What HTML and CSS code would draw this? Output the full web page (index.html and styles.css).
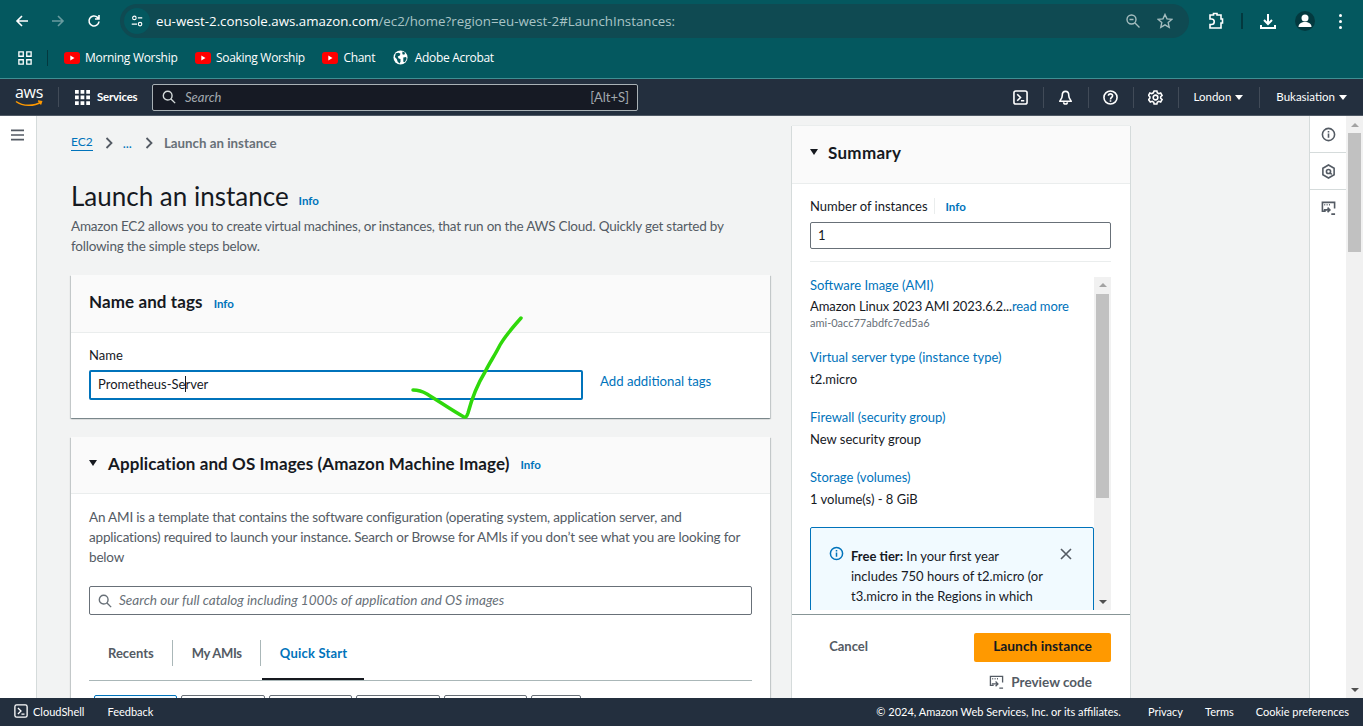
FILE: index.html
```html
<!DOCTYPE html>
<html lang="en">
<head>
    <meta charset="UTF-8">
    <meta name="viewport" content="width=device-width, initial-scale=1.0">
    <link rel="stylesheet" href="styles.css">
    <title>Launch an instance | EC2</title>
</head>
<body>
<div class="page">

    <!-- browser toolbar -->
    <header class="browser">
        <div class="toolbar">
            <svg class="tool back" viewBox="0 0 16 16"><path d="M14 8H3M8 3 3 8l5 5"/></svg>
            <svg class="tool forward" viewBox="0 0 16 16"><path d="M2 8h11M8 3l5 5-5 5"/></svg>
            <svg class="tool reload" viewBox="0 0 16 16"><path d="M13 8.500A5 5 0 1 1 11.500 4.400L13 6M13 2v4H9"/></svg>
            <div class="omnibox">
                <span class="site-info">
                    <svg viewBox="0 0 16 16"><circle cx="5" cy="4.500" r="2"/><path d="M9 4.500h5M2 11.500h6"/><circle cx="11.500" cy="11.500" r="2"/></svg>
                </span>
                <span class="url"><b>eu-west-2.console.aws.amazon.com</b>/ec2/home?region=eu-west-2#LaunchInstances:</span>
                <svg class="omni-icon zoom-icon" viewBox="0 0 16 16"><circle cx="6.500" cy="6.500" r="4.500"/><path d="M10 10l4.500 4.500M4.500 6.500h4"/></svg>
                <svg class="omni-icon star" viewBox="0 0 16 16"><path d="M8 1.500l2 4.400 4.800.5-3.600 3.200 1 4.700L8 11.900l-4.200 2.400 1-4.700L1.200 6.400l4.800-.5z"/></svg>
            </div>
            <svg class="tool ext" viewBox="0 0 18 18"><path d="M3 3h3.500V1.500h3.500V3h4v4h1.500v4H14v5H3v-3.500h1.500a2 2 0 0 0 0-5.500H3z"/></svg>
            <span class="tool-sep"></span>
            <svg class="tool download" viewBox="0 0 18 18"><path d="M9 2v10M5 8l4 4 4-4M2 13v3h14v-3"/></svg>
            <span class="avatar">
                <svg viewBox="0 0 20 20"><circle cx="10" cy="7" r="3.500"/><path d="M3.500 16c0-3.500 3-5 6.500-5s6.500 1.500 6.500 5z"/></svg>
            </span>
            <span class="kebab"><i></i><i></i><i></i></span>
        </div>
        <div class="bookmarks">
            <svg class="apps" viewBox="0 0 16 16"><path d="M1 1h5v5H1zM10 1h5v5h-5zM1 10h5v5H1zM10 10h5v5h-5z"/></svg>
            <span class="bm-sep"></span>
            <a class="bookmark"><svg class="yt" viewBox="0 0 16 12"><rect width="16" height="12" rx="3"/><path d="M6.300 3.500v5L10.500 6z"/></svg>Morning Worship</a>
            <a class="bookmark"><svg class="yt" viewBox="0 0 16 12"><rect width="16" height="12" rx="3"/><path d="M6.300 3.500v5L10.500 6z"/></svg>Soaking Worship</a>
            <a class="bookmark"><svg class="yt" viewBox="0 0 16 12"><rect width="16" height="12" rx="3"/><path d="M6.300 3.500v5L10.500 6z"/></svg>Chant</a>
            <a class="bookmark"><svg class="globe" viewBox="0 0 16 16"><circle cx="8" cy="8" r="7.500"/><path d="M3 3.500l3-.5 2 1-1 2-2 1 1 2 2 .5v3l-1 2-2-2-1-3-2-2zM10 1.500l3 1.500-1 2-2-.5zM11 8l3-.5.500 2-2 3.500-1.500-.5z"/></svg>Adobe Acrobat</a>
        </div>
    </header>

    <!-- console nav -->
    <nav class="topnav">
        <div class="aws-logo">
            <span>aws</span>
            <svg viewBox="0 0 28 7"><path d="M1 1.500c7 5 18 5 25 .5M23 1l3.500.5-1 3"/></svg>
        </div>
        <span class="nav-divider"></span>
        <svg class="grid-icon" viewBox="0 0 14 14"><path d="M0 0h3.500v3.500H0zM5.200 0h3.500v3.500H5.200zM10.500 0H14v3.500h-3.500zM0 5.200h3.500v3.500H0zM5.200 5.200h3.500v3.500H5.200zM10.500 5.200H14v3.500h-3.500zM0 10.500h3.500V14H0zM5.200 10.500h3.500V14H5.200zM10.500 10.500H14V14h-3.500z"/></svg>
        <span class="services">Services</span>
        <div class="nav-search">
            <svg viewBox="0 0 16 16"><circle cx="6.500" cy="6.500" r="5"/><path d="M10 10l5 5"/></svg>
            <em>Search</em>
            <span class="shortcut">[Alt+S]</span>
        </div>
        <div class="nav-right">
            <span class="nav-cell">
                <svg class="nav-icon" viewBox="0 0 16 16"><rect x="1" y="1" width="14" height="14" rx="2"/><path d="M4.500 4.500 8 8l-3.500 3.500M8.500 11.500H12"/></svg>
            </span>
            <span class="nav-cell">
                <svg class="nav-icon" viewBox="0 0 16 16"><path d="M8 1.500c-2.500 0-3.500 2-3.500 4.500 0 3-2.500 5-2.500 6h12c0-1-2.500-3-2.500-6 0-2.500-1-4.500-3.500-4.500zM6 13c0 2.500 4 2.500 4 0"/></svg>
            </span>
            <span class="nav-cell">
                <svg class="nav-icon" viewBox="0 0 16 16"><circle cx="8" cy="8" r="7"/><path d="M5.800 6.200C5.800 3.500 10.200 3.500 10.200 6c0 2-2.200 1.800-2.200 4M8 11v1.500"/></svg>
            </span>
            <span class="nav-cell">
                <svg class="nav-icon" viewBox="0 0 16 16"><circle cx="8" cy="8" r="2.500"/><path d="M6.500 1h3l.4 2 1.600.9 2-.7 1.500 2.600-1.500 1.400v1.600l1.500 1.400-1.500 2.600-2-.7-1.600.9-.4 2h-3l-.4-2-1.600-.9-2 .7L.5 10.200 2 8.800V7.200L.5 5.800 2 3.200l2 .7 1.600-.9z"/></svg>
            </span>
            <span class="nav-cell nav-menu london">London <i class="caret-down"></i></span>
            <span class="nav-cell nav-menu">Bukasiation <i class="caret-down"></i></span>
        </div>
    </nav>

    <div class="workspace">
        <aside class="side-rail">
            <svg viewBox="0 0 14 12"><path d="M0 1h14M0 6h14M0 11h14"/></svg>
        </aside>

        <main class="content">
            <div class="wizard">
                <div class="crumbs">
                    <a class="crumb-link">EC2</a>
                    <svg viewBox="0 0 8 12"><path d="M1.500 1l5 5-5 5"/></svg>
                    <a class="crumb-dots">...</a>
                    <svg class="crumb-last" viewBox="0 0 8 12"><path d="M1.500 1l5 5-5 5"/></svg>
                    <span class="crumb-current">Launch an instance</span>
                </div>
                <div class="page-title">
                    <h1>Launch an instance</h1>
                    <a class="info">Info</a>
                </div>
                <p class="page-desc">Amazon EC2 allows you to create virtual machines, or instances, that run on the AWS Cloud. Quickly get started by following the simple steps below.</p>

                <section class="card name-card">
                    <div class="card-head">
                        <h2>Name and tags</h2>
                        <a class="info">Info</a>
                    </div>
                    <div class="card-body">
                        <label class="field-label">Name</label>
                        <div class="name-row">
                            <div class="name-input">Prometheus-Se<span class="text-caret"></span>rver</div>
                            <a class="link">Add additional tags</a>
                        </div>
                    </div>
                </section>

                <section class="card ami-card">
                    <div class="card-head">
                        <i class="caret-card"></i>
                        <h2>Application and OS Images (Amazon Machine Image)</h2>
                        <a class="info">Info</a>
                    </div>
                    <div class="card-body">
                        <p class="ami-desc">An AMI is a template that contains the software configuration (operating system, application server, and applications) required to launch your instance. Search or Browse for AMIs if you don’t see what you are looking for below</p>
                        <div class="ami-search">
                            <svg viewBox="0 0 16 16"><circle cx="6.500" cy="6.500" r="5"/><path d="M10 10l5 5"/></svg>
                            <em>Search our full catalog including 1000s of application and OS images</em>
                        </div>
                        <div class="tabs">
                            <span class="tab">Recents</span>
                            <span class="tab tab-amis">My AMIs</span>
                            <span class="tab active">Quick Start</span>
                        </div>
                        <div class="tiles">
                            <span class="tile selected"></span>
                            <span class="tile"></span>
                            <span class="tile"></span>
                            <span class="tile"></span>
                            <span class="tile"></span>
                            <span class="tile short"></span>
                        </div>
                    </div>
                </section>
            </div>

            <section class="summary">
                <div class="summary-head">
                    <i class="caret-card"></i>
                    <h2>Summary</h2>
                </div>
                <div class="summary-body">
                    <div class="count-label"><span>Number of instances</span><a class="info">Info</a></div>
                    <div class="count-input">1</div>
                    <hr class="summary-rule">
                    <div class="summary-scroll">
                        <div class="summary-list">
                            <a class="link">Software Image (AMI)</a>
                            <p class="val ami-name">Amazon Linux 2023 AMI 2023.6.2...<a class="link">read more</a></p>
                            <p class="ami-id">ami-0acc77abdfc7ed5a6</p>
                            <a class="link gap-top">Virtual server type (instance type)</a>
                            <p class="val">t2.micro</p>
                            <a class="link gap-top">Firewall (security group)</a>
                            <p class="val">New security group</p>
                            <a class="link gap-top">Storage (volumes)</a>
                            <p class="val">1 volume(s) - 8 GiB</p>
                            <div class="free-tier">
                                <svg class="ft-icon" viewBox="0 0 16 16"><circle cx="8" cy="8" r="6.500"/><path d="M8 7v4.500M8 4.200v1.600"/></svg>
                                <p><b>Free tier:</b> In your first year includes 750 hours of t2.micro (or t3.micro in the Regions in which t2.micro is unavailable)</p>
                                <svg class="ft-close" viewBox="0 0 12 12"><path d="M1 1l10 10M11 1 1 11"/></svg>
                            </div>
                        </div>
                        <div class="mini-scroll">
                            <i class="arrow-up"></i>
                            <span class="mini-thumb"></span>
                            <i class="arrow-down"></i>
                        </div>
                    </div>
                </div>
                <div class="summary-foot">
                    <div class="actions">
                        <span class="cancel">Cancel</span>
                        <span class="launch">Launch instance</span>
                    </div>
                    <div class="preview">
                        <svg class="code-icon" viewBox="0 0 16 16"><path d="M5 11H1.500V1.500h13V8M3.500 4h1M6 4h1M8.500 4h1M3 9.500h6M7 7l2.500 2.500L7 12M11 14h4"/></svg>
                        <span>Preview code</span>
                    </div>
                </div>
            </section>
        </main>

        <aside class="tool-rail">
            <span class="rail-cell"><svg viewBox="0 0 16 16"><circle cx="8" cy="8" r="6.500"/><path d="M8 7v4.500M8 4.200v1.600"/></svg></span>
            <span class="rail-cell"><svg viewBox="0 0 16 16"><path d="M8 1l6 3.500v7L8 15l-6-3.500v-7z"/><circle cx="8" cy="8" r="2.200"/><path d="M9.500 9.500l2 1.500"/></svg></span>
            <span class="rail-cell plain"><svg viewBox="0 0 16 16"><path d="M5 11H1.500V1.500h13V8M3.500 4h1M6 4h1M8.500 4h1M3 9.500h6M7 7l2.500 2.500L7 12M11 14h4"/></svg></span>
        </aside>
        <div class="page-scroll">
            <i class="arrow-up"></i>
            <span class="page-thumb"></span>
            <i class="arrow-down"></i>
        </div>

        <!-- hand drawn tick on top of the screenshot -->
        <svg class="tick" viewBox="0 0 120 110"><path d="M3 74c5 0 9 1 14 4 13 8 26 17 37 23 2 1 3-1 4-4 4-15 9-28 17-41 5-10 10-17 15-27 5-9 13-18 21-27"/></svg>
    </div>

    <footer class="footer">
        <svg class="shell-icon" viewBox="0 0 16 16"><rect x="1" y="1" width="14" height="14" rx="2"/><path d="M4.500 4.500 8 8l-3.500 3.500M8.500 11.500H12"/></svg>
        <span class="foot-shell">CloudShell</span>
        <span class="foot-feedback">Feedback</span>
        <div class="foot-right">
            <span>© 2024, Amazon Web Services, Inc. or its affiliates.</span>
            <span class="foot-gap">Privacy</span>
            <span>Terms</span>
            <span>Cookie preferences</span>
        </div>
    </footer>
</div>
</body>
</html>
```

FILE: styles.css
```css
* {
    box-sizing: border-box;
}

html, body {
    margin: 0;
    height: 726px;
    overflow: hidden;
    background-color: #fff;
}

body {
    font-family: Lato, "Liberation Sans", sans-serif;
    font-size: 14px;
    color: #16191f;
}

svg {
    display: block;
    flex: none;
}

p, h1, h2 {
    margin: 0;
}

.page {
    width: 1363px;
    height: 726px;
    display: flex;
    flex-direction: column;
}

/* browser */
.browser {
    background-color: #04585f;
    font-family: "Open Sans", sans-serif;
    color: #fff;
    flex: none;
}

.toolbar {
    height: 40px;
    display: flex;
    align-items: center;
    padding: 2px 0 0 14px;
}

.tool {
    width: 16px;
    height: 16px;
    fill: none;
    stroke: #fff;
    stroke-width: 1.6;
}

.forward {
    margin-left: 20px;
    opacity: 0.4;
}

.reload {
    margin-left: 20px;
}

.omnibox {
    margin-left: 18px;
    width: 1069px;
    height: 34px;
    background-color: #0f4a52;
    border-radius: 17px;
    display: flex;
    align-items: center;
    padding: 0 16px 0 4px;
}

.site-info {
    width: 26px;
    height: 26px;
    border-radius: 50%;
    background-color: #04585f;
    display: flex;
    align-items: center;
    justify-content: center;
}

.site-info svg {
    width: 14px;
    height: 14px;
    fill: none;
    stroke: #fff;
    stroke-width: 1.3;
}

.url {
    margin-left: 6px;
    flex: 1;
    font-size: 13.3px;
    color: #a9c4c6;
    white-space: nowrap;
}

.url b {
    font-weight: 400;
    color: #fff;
}

.omni-icon {
    width: 16px;
    height: 16px;
    fill: none;
    stroke: #a5bdbf;
    stroke-width: 1.4;
}

.star {
    margin-left: 16px;
}

.ext {
    width: 18px;
    height: 18px;
    margin-left: 18px;
}

.tool-sep {
    width: 2px;
    height: 16px;
    background-color: #03393f;
    margin-left: 16px;
}

.download {
    width: 18px;
    height: 18px;
    margin-left: 16px;
    stroke-width: 2;
}

.avatar {
    width: 20px;
    height: 20px;
    border-radius: 50%;
    background-color: #03393f;
    margin-left: 18px;
}

.avatar svg {
    width: 20px;
    height: 20px;
    fill: #fff;
}

.kebab {
    margin-left: 24px;
    display: flex;
    flex-direction: column;
    gap: 3px;
}

.kebab i {
    width: 3px;
    height: 3px;
    border-radius: 50%;
    background-color: #fff;
}

.bookmarks {
    height: 39px;
    display: flex;
    align-items: center;
    padding: 0 0 3px 18px;
    border-bottom: 1px solid #3f8f93;
}

.apps {
    width: 14px;
    height: 14px;
    fill: none;
    stroke: #fff;
    stroke-width: 1.5;
}

.bm-sep {
    width: 1px;
    height: 16px;
    background-color: #03393f;
    margin: 0 16px 0 15px;
}

.bookmark {
    display: flex;
    align-items: center;
    font-size: 12px;
    letter-spacing: -0.3px;
    margin-right: 17.5px;
}

.yt {
    width: 16px;
    height: 12px;
    margin-right: 5px;
    fill: #f00;
}

.yt path {
    fill: #fff;
}

.globe {
    width: 15px;
    height: 15px;
    margin-right: 7px;
    fill: #fff;
}

.globe path {
    fill: #04585f;
}

/* console nav */
.topnav {
    height: 37px;
    flex: none;
    background-color: #232f3e;
    border-bottom: 1px solid #4f5965;
    display: flex;
    align-items: center;
    color: #fff;
    font-size: 11.5px;
    padding-left: 15px;
}

.aws-logo {
    width: 29px;
    position: relative;
    height: 28px;
}

.aws-logo span {
    display: block;
    font-family: "Open Sans", sans-serif;
    font-size: 16px;
    line-height: 18px;
    letter-spacing: -0.3px;
}

.aws-logo svg {
    width: 28px;
    height: 7px;
    margin-top: -1px;
    fill: none;
    stroke: #f90;
    stroke-width: 1.5;
}

.nav-divider {
    width: 1px;
    height: 20px;
    background-color: #414b58;
    margin: 0 16px 0 14px;
}

.grid-icon {
    width: 15px;
    height: 15px;
    fill: #fff;
}

.services {
    margin-left: 7px;
    width: 40px;
    font-weight: 700;
    font-size: 11.4px;
    letter-spacing: -0.2px;
    padding-bottom: 1px;
    white-space: nowrap;
}

.nav-search {
    margin-left: 15px;
    width: 486px;
    height: 27px;
    background-color: #161a24;
    border: 1px solid #a9b1b5;
    border-radius: 2px;
    display: flex;
    align-items: center;
    padding: 0 8px 0 9px;
    color: #a2a9af;
    font-size: 13px;
}

.nav-search svg {
    width: 14px;
    height: 14px;
    fill: none;
    stroke: #d5dbdb;
    stroke-width: 1.6;
}

.nav-search em {
    margin-left: 9px;
    flex: 1;
}

.nav-right {
    margin-left: auto;
    display: flex;
    align-items: center;
    padding-right: 16px;
}

.nav-cell {
    display: flex;
    align-items: center;
    height: 21px;
    padding: 0 15px 0 14px;
    border-right: 1px solid #414b58;
}

.nav-cell:last-child {
    border-right: 0;
    padding-right: 0;
    padding-left: 16px;
}

.nav-menu {
    padding-bottom: 2px;
}

.nav-icon {
    width: 15px;
    height: 15px;
    fill: none;
    stroke: #fff;
    stroke-width: 1.7;
}

.london {
    padding-left: 15px;
    padding-right: 16px;
}

.caret-down {
    display: inline-block;
    border-style: solid;
    border-width: 5px 4px 0;
    border-color: #fff transparent transparent;
    margin-left: 4px;
    margin-top: 2px;
}

/* workspace */
.workspace {
    flex: 1;
    min-height: 0;
    display: flex;
    position: relative;
    overflow: hidden;
    background-color: #f2f3f3;
}

.side-rail {
    width: 37px;
    flex: none;
    background-color: #fff;
    border-right: 1px solid #d5dbdb;
    padding: 13px 0 0 11px;
}

.side-rail svg {
    width: 13px;
    height: 12px;
    fill: none;
    stroke: #545b64;
    stroke-width: 1.8;
}

.content {
    width: 1272px;
    flex: none;
    display: flex;
    align-items: flex-start;
    gap: 22px;
    padding: 10px 0 0 34px;
}

.wizard {
    width: 699px;
    flex: none;
}

.crumbs {
    height: 14px;
    margin-top: 10px;
    display: flex;
    align-items: center;
    font-size: 13px;
}

.crumbs svg {
    width: 8px;
    height: 12px;
    fill: none;
    stroke: #545b64;
    stroke-width: 1.8;
    margin: 0 10px 0 12px;
}

.crumbs .crumb-last {
    margin: 0 11px 0 13px;
}

.crumb-link {
    color: #0073bb;
    border-bottom: 1px solid #0073bb;
    font-size: 12px;
    line-height: 14px;
    padding-bottom: 1px;
}

.crumb-dots {
    color: #0073bb;
}

.crumb-current {
    color: #687078;
    font-weight: 700;
    font-size: 13.3px;
}

.page-title {
    margin-top: 30px;
    height: 32px;
    display: flex;
    align-items: baseline;
    gap: 10px;
}

h1 {
    font-size: 26px;
    font-weight: 400;
    line-height: 32px;
}

.page-title .info {
    margin-top: -1px;
    position: relative;
    top: -1px;
}

.info {
    color: #0073bb;
    font-size: 11.5px;
    font-weight: 700;
}

.page-desc {
    margin-top: 4px;
    line-height: 20px;
    font-size: 13.5px;
    letter-spacing: -0.22px;
    color: #545b64;
    width: 670px;
}

.card {
    background-color: #fff;
    box-shadow: 0 1px 1px 0 rgba(0, 28, 36, 0.3), 1px 1px 1px 0 rgba(0, 28, 36, 0.15), -1px 1px 1px 0 rgba(0, 28, 36, 0.15);
}

.name-card {
    margin-top: 19px;
    height: 143px;
}

.ami-card {
    margin-top: 19px;
    height: 400px;
}

.card-head {
    height: 57px;
    background-color: #fafafa;
    border-bottom: 1px solid #eaeded;
    display: flex;
    align-items: center;
    padding: 0 18px 4px;
}

.name-card .card-head {
    height: 58px;
}

.card-head h2 {
    font-size: 17px;
    font-weight: 700;
    letter-spacing: 0.1px;
}

.card-head .info {
    margin-left: 11px;
    margin-top: 3px;
}

.caret-card {
    flex: none;
    width: 0;
    height: 0;
    border-style: solid;
    border-width: 6px 4.5px 0;
    border-color: #16191f transparent transparent;
    margin-right: 11px;
}

.card-body {
    padding: 0 18px;
}

.field-label {
    display: block;
    margin-top: 14px;
    font-size: 13px;
    line-height: 16px;
}

.name-row {
    display: flex;
    align-items: center;
    margin-top: 7px;
}

.name-input {
    width: 494px;
    height: 30px;
    border: 2px solid #0073bb;
    border-radius: 2px;
    line-height: 25px;
    padding-left: 7px;
    font-size: 13px;
}

.text-caret {
    display: inline-block;
    width: 1px;
    height: 16px;
    margin-right: -1px;
    background-color: #16191f;
    vertical-align: -3px;
}

.link {
    color: #0073bb;
    font-size: 13px;
}

.name-row .link {
    margin-left: 17px;
    margin-top: -8px;
    font-size: 13.2px;
}

.ami-desc {
    margin-top: 13px;
    line-height: 20px;
    font-size: 13.5px;
    letter-spacing: -0.18px;
    color: #545b64;
}

.ami-search {
    margin-top: 19px;
    height: 29px;
    border: 1px solid #687078;
    border-radius: 2px;
    display: flex;
    align-items: center;
    padding: 0 0 2px 8px;
    color: #687078;
    font-size: 13.55px;
}

.ami-search svg {
    width: 14px;
    height: 14px;
    fill: none;
    stroke: #687078;
    stroke-width: 1.6;
    margin: 2px 7px 0 0;
}

.tabs {
    margin-top: 25px;
    display: flex;
    height: 41px;
    border-bottom: 1px solid #aab7b8;
}

.tab {
    height: 26px;
    line-height: 26px;
    padding: 0 18px 0 19px;
    border-right: 1px solid #aab7b8;
    color: #545b64;
    font-weight: 700;
    font-size: 13px;
}

.tab-amis {
    letter-spacing: -0.3px;
}

.tab.active {
    border-right: 0;
    color: #0073bb;
    letter-spacing: 0.2px;
    position: relative;
}

.tab.active::after {
    content: "";
    position: absolute;
    left: 1px;
    right: 1px;
    top: 38px;
    height: 2px;
    background-color: #16191f;
}

.tiles {
    margin-top: 14px;
    padding-left: 5px;
    display: flex;
    gap: 4px;
}

.tile {
    width: 83.4px;
    height: 30px;
    border: 1px solid #687078;
    border-radius: 2px;
}

.tile.selected {
    border-color: #0073bb;
    background-color: #f1faff;
}

.tile.short {
    width: 50px;
}

/* summary */
.summary {
    width: 338px;
    flex: none;
    height: 590px;
    background-color: #fff;
    box-shadow: 1px 0 0 #d5dbdb, -1px 0 0 #d5dbdb, 0 -1px 0 #eaeded;
}

.summary-head {
    height: 58px;
    background-color: #fafafa;
    border-bottom: 1px solid #eaeded;
    display: flex;
    align-items: center;
    padding: 0 18px 5px;
}

.summary-head .caret-card {
    margin-right: 10px;
}

.summary-head h2 {
    font-size: 17px;
    font-weight: 700;
    letter-spacing: 0.3px;
}

.summary-body {
    height: 431px;
    padding: 14px 19px 0 18px;
    border-bottom: 1px solid #879596;
}

.count-label {
    display: flex;
    align-items: center;
    height: 16px;
    font-size: 13px;
}

.count-label span {
    padding-right: 6px;
    border-right: 1px solid #eaeded;
    margin-right: 11px;
}

.count-input {
    margin-top: 8px;
    height: 27px;
    border: 1px solid #687078;
    border-radius: 2px;
    padding-left: 7px;
    line-height: 25px;
    font-size: 13px;
}

.summary-rule {
    margin: 12px 0 15px;
    border: 0;
    border-top: 1px solid #eaeded;
}

.summary-scroll {
    display: flex;
    height: 333px;
    overflow: hidden;
}

.summary-list {
    width: 284px;
    flex: none;
    font-size: 13px;
}

.summary-list .link {
    display: block;
    line-height: 17px;
}

.summary-list .gap-top {
    margin-top: 21px;
}

.val {
    margin-top: 4px;
    line-height: 18px;
}

.ami-name {
    margin-top: 3px;
    letter-spacing: -0.1px;
}

.val .link {
    display: inline;
}

.ami-id {
    margin-top: 1px;
    margin-bottom: -2px;
    font-size: 11px;
    line-height: 14px;
    color: #687078;
}

.free-tier {
    margin-top: 19px;
    width: 284px;
    height: 170px;
    background-color: #f1faff;
    border: 1px solid #0073bb;
    border-radius: 2px;
    padding: 18px 0 0 18px;
    display: flex;
    align-items: flex-start;
}

.free-tier p {
    margin-left: 7px;
    line-height: 20px;
    width: 197px;
    flex: none;
}

.ft-icon {
    width: 15px;
    height: 15px;
    fill: none;
    stroke: #0073bb;
    stroke-width: 1.6;
}

.ft-close {
    width: 12px;
    height: 12px;
    margin: 2px 0 0 12px;
    fill: none;
    stroke: #545b64;
    stroke-width: 1.6;
}

.mini-scroll {
    width: 17px;
    flex: none;
    background-color: #f1f1f1;
    display: flex;
    flex-direction: column;
    align-items: center;
    padding-top: 6px;
}

.mini-thumb {
    display: block;
    width: 13px;
    height: 204px;
    margin-top: 7px;
    background-color: #c1c1c1;
}

.arrow-up,
.arrow-down {
    display: block;
    width: 0;
    height: 0;
    flex: none;
    border-style: solid;
    border-color: transparent;
}

.arrow-up {
    border-width: 0 4px 4px;
    border-bottom-color: #a3a3a3;
}

.arrow-down {
    border-width: 4px 4px 0;
    border-top-color: #505050;
}

.mini-scroll .arrow-down {
    margin-top: 102px;
}

.summary-foot {
    padding: 18px 19px 0 0;
}

.actions {
    display: flex;
    justify-content: flex-end;
    align-items: center;
}

.cancel {
    color: #545b64;
    font-weight: 700;
    font-size: 13px;
    margin: -3px 106px 0 0;
}

.launch {
    width: 137px;
    height: 29px;
    line-height: 26px;
    text-align: center;
    background-color: #f90;
    border-radius: 2px;
    color: #16191f;
    font-weight: 700;
    font-size: 13.8px;
}

.preview {
    margin-top: 12px;
    display: flex;
    justify-content: flex-end;
    align-items: center;
    padding-right: 19px;
    color: #545b64;
    font-weight: 700;
    font-size: 13.5px;
}

.code-icon {
    width: 15px;
    height: 15px;
    margin-right: 7px;
    fill: none;
    stroke: #545b64;
    stroke-width: 1.4;
}

.tool-rail {
    width: 37px;
    flex: none;
    background-color: #fff;
    border-left: 1px solid #d5dbdb;
}

.rail-cell {
    display: flex;
    align-items: center;
    justify-content: center;
    height: 37px;
    border-bottom: 1px solid #d5dbdb;
}

.rail-cell.plain {
    border-bottom: 0;
}

.rail-cell svg {
    width: 15px;
    height: 15px;
    fill: none;
    stroke: #545b64;
    stroke-width: 1.7;
}

.page-scroll {
    width: 17px;
    flex: none;
    background-color: #f1f1f1;
    display: flex;
    flex-direction: column;
    align-items: center;
    padding-top: 7px;
}

.page-thumb {
    display: block;
    width: 13px;
    height: 119px;
    margin-top: 6px;
    background-color: #c1c1c1;
}

.page-scroll .arrow-down {
    margin-top: auto;
    margin-bottom: 6px;
}

.tick {
    position: absolute;
    left: 410px;
    top: 200px;
    width: 120px;
    height: 110px;
    fill: none;
    stroke: #2fd80b;
    stroke-width: 3.5;
    stroke-linecap: round;
    stroke-linejoin: round;
}

/* footer */
.footer {
    height: 28px;
    flex: none;
    background-color: #232f3e;
    color: #fff;
    display: flex;
    align-items: center;
    font-size: 11px;
    padding: 0 14px 2px;
}

.shell-icon {
    width: 14px;
    height: 14px;
    fill: none;
    stroke: #fff;
    stroke-width: 1.5;
}

.foot-shell {
    margin-left: 5px;
}

.foot-feedback {
    margin-left: 23px;
}

.foot-right {
    margin-left: auto;
    display: flex;
    gap: 22px;
}

.foot-gap {
    margin-left: 5px;
}
```
